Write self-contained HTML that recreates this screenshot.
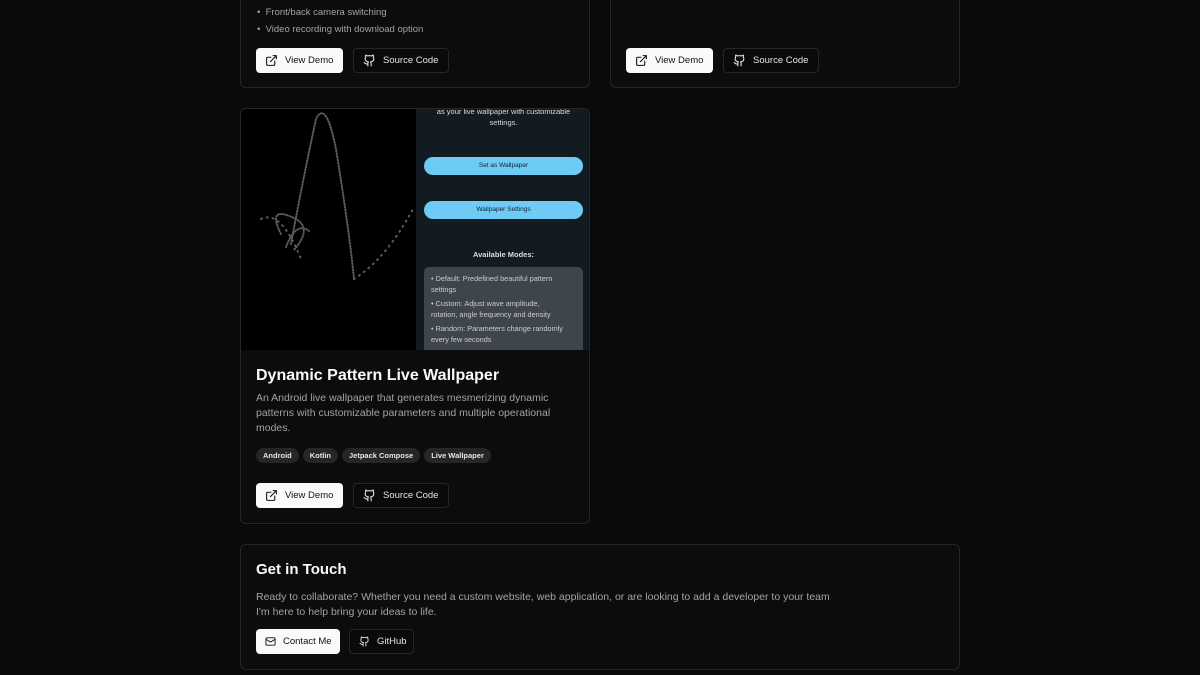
<!DOCTYPE html>
<html><head><meta charset="utf-8"><style>
*{box-sizing:border-box;margin:0;padding:0}
body{width:1200px;height:675px;background:#0a0a0a;font-family:"Liberation Sans",sans-serif;color:#fafafa;position:relative;overflow:hidden}
.card{position:absolute;border:1px solid #262626;border-radius:6px;background:#0c0c0c}
.btn{position:absolute;height:25px;border-radius:4px;font-size:9.5px;display:flex;align-items:center;gap:7px;padding-left:9px}
.w{background:#fafafa;color:#111}
.d{border:1px solid #262626;color:#e5e5e5;background:#0a0a0a}
svg{fill:none;stroke:currentColor;stroke-width:2;stroke-linecap:round;stroke-linejoin:round}
.muted{color:#a3a3a3}
.tag{display:inline-block;background:#262626;color:#e5e5e5;font-size:7.5px;font-weight:bold;border-radius:8px;padding:3px 7px;margin-right:4px}
</style></head><body>
<svg width="0" height="0" style="position:absolute"><defs>
<symbol id="ext" viewBox="0 0 24 24"><path d="M15 3h6v6M10 14 21 3M18 13v6a2 2 0 0 1-2 2H5a2 2 0 0 1-2-2V8a2 2 0 0 1 2-2h6"/></symbol>
<symbol id="gh" viewBox="0 0 24 24"><path d="M15 22v-4a4.8 4.8 0 0 0-1-3.5c3 0 6-2 6-5.5.08-1.25-.27-2.48-1-3.5.28-1.150.28-2.35 0-3.5 0 0-1 0-3 1.5-2.64-.5-5.36-.5-8 0C6 2 5 2 5 2c-.3 1.15-.3 2.35 0 3.5A5.4 5.4 0 0 0 4 9c0 3.5 3 5.5 6 5.5-.39.49-.68 1.050-.85 1.65-.17.6-.22 1.23-.15 1.85v4M9 18c-4.51 2-5-2-7-2"/></symbol>
</defs></svg>

<div class="card" style="left:240px;top:-20px;width:350px;height:108px">
<div class="muted" style="position:absolute;left:16px;top:23px;font-size:9.5px;line-height:17px">• &nbsp;Front/back camera switching<br>• &nbsp;Video recording with download option</div>
</div>
<div class="btn w" style="left:256px;top:48px;width:87px"><svg width="13" height="13"><use href="#ext"/></svg>View Demo</div>
<div class="btn d" style="left:353px;top:48px;width:96px"><svg width="13" height="13"><use href="#gh"/></svg>Source Code</div>

<div class="card" style="left:610px;top:-20px;width:350px;height:108px"></div>
<div class="btn w" style="left:626px;top:48px;width:87px"><svg width="13" height="13"><use href="#ext"/></svg>View Demo</div>
<div class="btn d" style="left:723px;top:48px;width:96px"><svg width="13" height="13"><use href="#gh"/></svg>Source Code</div>

<div class="card" style="left:240px;top:108px;width:350px;height:416px;overflow:hidden">
<div style="position:absolute;left:0;top:0;width:175px;height:241px;background:#000">
<svg width="175" height="241" style="stroke:#999;stroke-width:2;opacity:.6;stroke-dasharray:1 2"><path d="M50 135 Q62 70 75 10 Q85 -10 95 40 Q108 120 113 170"/><path d="M40 125 Q25 95 55 110 Q72 120 52 142"/><path d="M45 138 Q55 112 68 122"/><path d="M113 170 Q145 150 172 100" stroke-dasharray="1 5"/><path d="M20 110 Q40 100 60 150" stroke-dasharray="1 5"/></svg>
</div>
<div style="position:absolute;left:175px;top:0;width:175px;height:241px;overflow:hidden;background:#121a22;text-align:center;font-size:7.5px;color:#ddd">
<div style="margin-top:-3px;line-height:11px">as your live wallpaper with customizable<br>settings.</div>
<div style="margin:29px 8px 0;height:18px;border-radius:9px;background:#6ecbf5;color:#123;font-size:6.5px;line-height:18px">Set as Wallpaper</div>
<div style="margin:26px 8px 0;height:18px;border-radius:9px;background:#6ecbf5;color:#123;font-size:6.5px;line-height:18px">Wallpaper Settings</div>
<div style="margin-top:31px;font-weight:bold;font-size:7.5px">Available Modes:</div>
<div style="margin:8px 8px 0;height:90px;border-radius:5px;background:#3f454d;text-align:left;padding:6px 7px;font-size:7.3px;line-height:11px;color:#ccc">• Default: Predefined beautiful pattern<br>settings<div style="height:3px"></div>• Custom: Adjust wave amplitude,<br>rotation, angle frequency and density<div style="height:3px"></div>• Random: Parameters change randomly<br>every few seconds</div>
</div>
<div style="position:absolute;left:15px;top:258px;font-size:16px;font-weight:bold">Dynamic Pattern Live Wallpaper</div>
<div class="muted" style="position:absolute;left:15px;top:282px;width:310px;font-size:10.5px;line-height:15px">An Android live wallpaper that generates mesmerizing dynamic patterns with customizable parameters and multiple operational modes.</div>
<div style="position:absolute;left:15px;top:336px"><span class="tag">Android</span><span class="tag">Kotlin</span><span class="tag">Jetpack Compose</span><span class="tag">Live Wallpaper</span></div>
</div>
<div class="btn w" style="left:256px;top:483px;width:87px"><svg width="13" height="13"><use href="#ext"/></svg>View Demo</div>
<div class="btn d" style="left:353px;top:483px;width:96px"><svg width="13" height="13"><use href="#gh"/></svg>Source Code</div>

<div class="card" style="left:240px;top:544px;width:720px;height:126px">
<div style="position:absolute;left:15px;top:16px;font-size:15px;font-weight:bold">Get in Touch</div>
<div class="muted" style="position:absolute;left:15px;top:45px;font-size:10.5px;line-height:15px;width:640px">Ready to collaborate? Whether you need a custom website, web application, or are looking to add a developer to your team<br>I'm here to help bring your ideas to life.</div>
</div>
<div class="btn w" style="left:256px;top:629px;width:84px"><svg width="11" height="11" viewBox="0 0 24 24"><rect x="2" y="4" width="20" height="16" rx="2"/><path d="m22 7-8.97 5.7a1.94 1.94 0 0 1-2.06 0L2 7"/></svg>Contact Me</div>
<div class="btn d" style="left:349px;top:629px;width:65px"><svg width="11" height="11"><use href="#gh"/></svg>GitHub</div>
</body></html>
